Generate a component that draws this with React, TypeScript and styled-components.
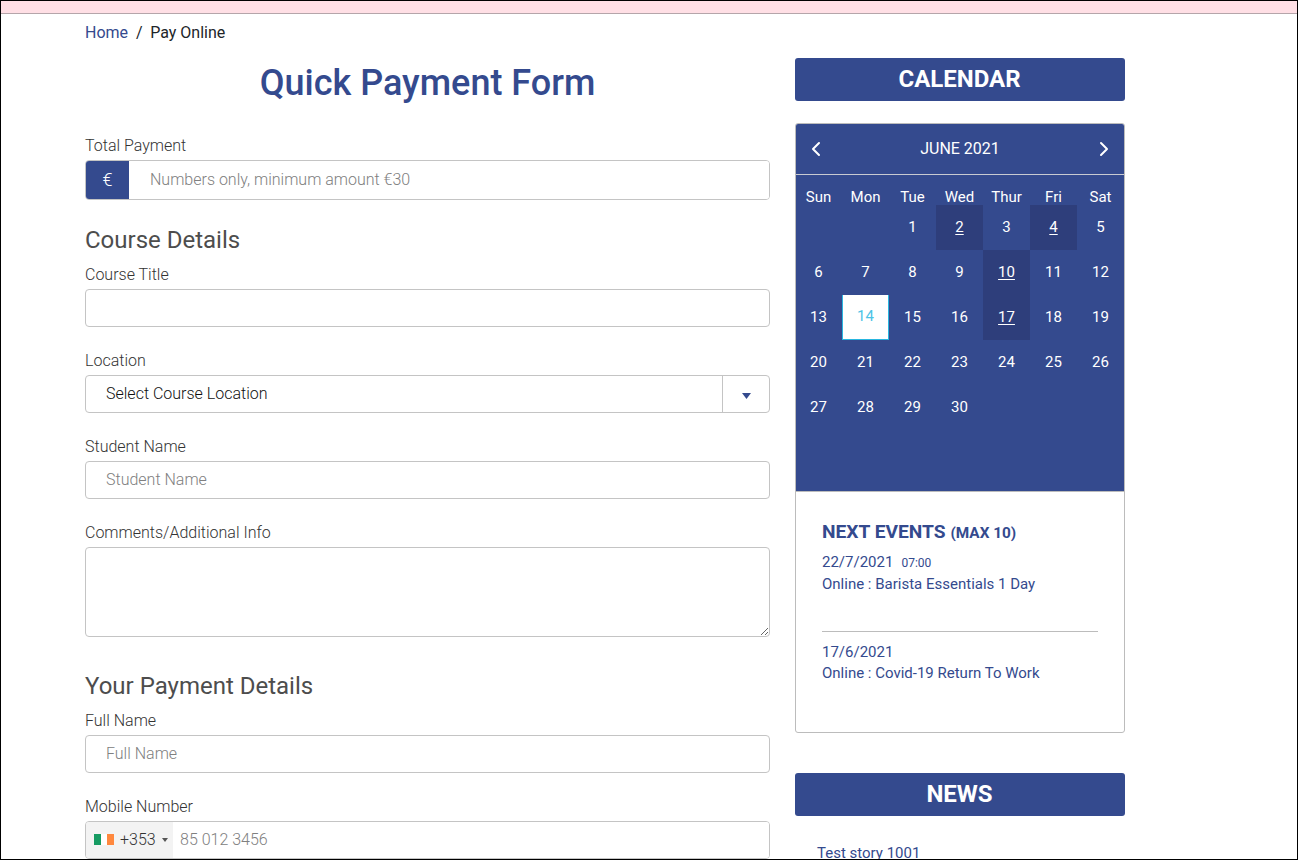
import styled, { createGlobalStyle } from "styled-components";
import { ChevronLeft, ChevronRight } from "lucide-react";

const blue = "#344a8e";

const GlobalStyle = createGlobalStyle`
  html, body {
    margin: 0;
    padding: 0;
    background: #fff;
    font-family: Roboto, "Liberation Sans", sans-serif;
  }
  * { box-sizing: border-box; }
`;

const Page = styled.div`
  height: 860px;
  overflow: hidden;
  border: 1px solid #000;
  background: #fff;
`;

const AlertBar = styled.div`
  height: 13px;
  background: #ffdfe5;
  border-bottom: 1px solid #b5a5aa;
`;

const Content = styled.div`
  display: grid;
  grid-template-columns: 685px 330px;
  column-gap: 25px;
  padding-left: 84px;
`;

const Breadcrumb = styled.nav`
  display: flex;
  height: 36px;
  align-items: center;
  font-size: 16px;
  color: #212529;
`;

const Crumb = styled.a`
  color: ${blue};
`;

const Sep = styled.span`
  padding: 0 7.5px 0 8px;
`;

const Title = styled.h1`
  margin: 7px 0 25px;
  font-size: 36px;
  line-height: 52px;
  font-weight: 500;
  text-align: center;
  color: ${blue};
`;

const Field = styled.div<{ $gap?: number }>`
  margin-bottom: ${(p) => p.$gap ?? 22}px;
`;

const Label = styled.label`
  display: block;
  height: 22px;
  margin-bottom: 4px;
  font-size: 16px;
  line-height: 24px;
  font-weight: 300;
  color: #333;
`;

const SectionTitle = styled.h2`
  margin: 0 0 8px;
  font-size: 24px;
  line-height: 30px;
  font-weight: 400;
  color: #4d4d4d;
`;

const Input = styled.input`
  display: block;
  width: 100%;
  height: 38px;
  padding: 0 20px 2px;
  border: 1px solid #c4c4c4;
  border-radius: 4px;
  outline: none;
  font: 300 16px Roboto, sans-serif;
  &::placeholder {
    color: #808080;
    opacity: 1;
  }
`;

const TextArea = styled.textarea`
  display: block;
  width: 100%;
  height: 90px;
  border: 1px solid #c4c4c4;
  border-radius: 4px;
  outline: none;
`;

const AmountGroup = styled.div`
  display: flex;
  height: 40px;
  border: 1px solid #c4c4c4;
  border-radius: 4px;
  overflow: hidden;
`;

const Addon = styled.span`
  display: flex;
  width: 43px;
  align-items: center;
  justify-content: center;
  padding-bottom: 2px;
  background: ${blue};
  color: #fff;
  font-size: 18px;
  font-weight: 300;
`;

const BareInput = styled.input`
  flex: 1;
  min-width: 0;
  padding: 0 20px 2px 21px;
  border: 0;
  outline: none;
  font: 300 16px Roboto, sans-serif;
  &::placeholder {
    color: #808080;
    opacity: 1;
  }
`;

const Select = styled.div`
  display: flex;
  height: 38px;
  border: 1px solid #c4c4c4;
  border-radius: 4px;
`;

const SelectValue = styled.span`
  flex: 1;
  padding-left: 20px;
  font-size: 16px;
  line-height: 35px;
  font-weight: 300;
  color: #111;
`;

const SelectArrow = styled.span`
  display: flex;
  width: 47px;
  align-items: center;
  justify-content: center;
  padding-top: 4px;
  border-left: 1px solid #c4c4c4;
  color: ${blue};
`;

const PhoneGroup = styled.div`
  display: flex;
  height: 38px;
  border: 1px solid #c4c4c4;
  border-radius: 4px;
  overflow: hidden;
`;

const DialCode = styled.div`
  display: flex;
  width: 87px;
  align-items: center;
  padding: 0 0 1px 8px;
  background: #f3f3f3;
  font-size: 16px;
  font-weight: 300;
  color: #333;
`;

const Flag = styled.span`
  display: block;
  width: 20px;
  height: 11px;
  margin-right: 6px;
  background: linear-gradient(90deg, #169b62 33.3%, #fff 33.3%, #fff 66.6%, #ff883e 66.6%);
`;

const Caret = styled.span`
  width: 0;
  height: 0;
  margin-left: 6px;
  border-left: 3px solid transparent;
  border-right: 3px solid transparent;
  border-top: 4px solid #555;
`;

const PhoneInput = styled(BareInput)`
  padding: 0 7px 1px;
`;

const Sidebar = styled.aside`
  padding-top: 44px;
`;

const SideHeading = styled.h3`
  margin: 0;
  height: 43px;
  padding-right: 1px;
  border-radius: 3px;
  background: ${blue};
  color: #fff;
  font-size: 24px;
  line-height: 42px;
  font-weight: 700;
  text-align: center;
`;

const CalendarBox = styled.section`
  height: 610px;
  margin: 22px 0 40px;
  border: 1px solid #bcbcbc;
  border-radius: 3px;
  overflow: hidden;
`;

const CalendarBlue = styled.div`
  height: 368px;
  background: ${blue};
  border-bottom: 1px solid #bcbcbc;
  color: #fff;
  font-size: 15px;
`;

const MonthBar = styled.div`
  display: flex;
  height: 51px;
  align-items: center;
  justify-content: space-between;
  padding: 0 8px;
  border-bottom: 1px solid #c9cbd2;
  font-size: 16px;
`;

const MonthLabel = styled.span`
  margin-bottom: 2px;
`;

const WeekRow = styled.div`
  display: grid;
  grid-template-columns: repeat(7, 47px);
  height: 30px;
  margin-left: -1px;
`;

const WeekDay = styled.div`
  padding-top: 14px;
  line-height: 16px;
  text-align: center;
  font-size: 15px;
`;

const Grid = styled.div`
  display: grid;
  grid-template-columns: repeat(7, 47px);
  grid-auto-rows: 45px;
  margin-left: -1px;
`;

const Day = styled.div<{ $event?: boolean; $today?: boolean }>`
  display: flex;
  align-items: center;
  justify-content: center;
  padding-bottom: 2px;
  font-size: 15px;
  background: ${(p) => (p.$today ? "#fff" : p.$event ? "#2e3e7b" : "transparent")};
  color: ${(p) => (p.$today ? "#4cc3e6" : "#fff")};
  border: ${(p) => (p.$today ? "1px solid #29b6e0" : "0")};
  border-top: 0;
  text-decoration: ${(p) => (p.$event ? "underline" : "none")};
  text-underline-offset: 2px;
`;

const Events = styled.div`
  padding: 28px 26px 0;
  color: ${blue};
`;

const EventsTitle = styled.h4`
  margin: 0 0 7px;
  font-size: 19.2px;
  line-height: 24px;
  font-weight: 700;
  small {
    font-size: 80%;
  }
`;

const EventItem = styled.div<{ $last?: boolean }>`
  height: ${(p) => (p.$last ? "auto" : "80px")};
  margin-bottom: ${(p) => (p.$last ? "0" : "10px")};
  border-bottom: ${(p) => (p.$last ? "0" : "1px solid #bcbcbc")};
  font-size: 15px;
  line-height: 21px;
`;

const EventTime = styled.span`
  margin-left: 8px;
  font-size: 12px;
  line-height: 22px;
`;

const NewsLink = styled.a`
  display: block;
  margin: 27px 0 0 22px;
  font-size: 15px;
  line-height: 20px;
  color: ${blue};
`;

const weekDays = ["Sun", "Mon", "Tue", "Wed", "Thur", "Fri", "Sat"];
const eventDays = [2, 4, 10, 17];
const days = [null, null, ...Array.from({ length: 30 }, (_, i) => i + 1)];

export default function App() {
  return (
    <Page>
      <GlobalStyle />
      <AlertBar />
      <Content>
        <main>
          <Breadcrumb>
            <Crumb>Home</Crumb>
            <Sep>/</Sep>
            <span>Pay Online</span>
          </Breadcrumb>
          <Title>Quick Payment Form</Title>
          <Field $gap={25}>
            <Label>Total Payment</Label>
            <AmountGroup>
              <Addon>€</Addon>
              <BareInput placeholder="Numbers only, minimum amount €30" />
            </AmountGroup>
          </Field>
          <SectionTitle>Course Details</SectionTitle>
          <Field>
            <Label>Course Title</Label>
            <Input />
          </Field>
          <Field>
            <Label>Location</Label>
            <Select>
              <SelectValue>Select Course Location</SelectValue>
              <SelectArrow>
                <svg width="9" height="6" viewBox="0 0 9 6">
                  <path d="M0 0h9L4.5 6z" fill="currentColor" />
                </svg>
              </SelectArrow>
            </Select>
          </Field>
          <Field>
            <Label>Student Name</Label>
            <Input placeholder="Student Name" />
          </Field>
          <Field $gap={34}>
            <Label>Comments/Additional Info</Label>
            <TextArea />
          </Field>
          <SectionTitle>Your Payment Details</SectionTitle>
          <Field>
            <Label>Full Name</Label>
            <Input placeholder="Full Name" />
          </Field>
          <Field>
            <Label>Mobile Number</Label>
            <PhoneGroup>
              <DialCode>
                <Flag />
                +353
                <Caret />
              </DialCode>
              <PhoneInput placeholder="85 012 3456" />
            </PhoneGroup>
          </Field>
        </main>
        <Sidebar>
          <SideHeading>CALENDAR</SideHeading>
          <CalendarBox>
            <CalendarBlue>
              <MonthBar>
                <ChevronLeft size={24} strokeWidth={2} />
                <MonthLabel>JUNE 2021</MonthLabel>
                <ChevronRight size={24} strokeWidth={2} />
              </MonthBar>
              <WeekRow>
                {weekDays.map((d) => (
                  <WeekDay key={d}>{d}</WeekDay>
                ))}
              </WeekRow>
              <Grid>
                {days.map((d, i) => (
                  <Day key={i} $event={d !== null && eventDays.includes(d)} $today={d === 14}>
                    {d}
                  </Day>
                ))}
              </Grid>
            </CalendarBlue>
            <Events>
              <EventsTitle>
                NEXT EVENTS <small>(MAX 10)</small>
              </EventsTitle>
              <EventItem>
                22/7/2021<EventTime>07:00</EventTime>
                <br />
                Online : Barista Essentials 1 Day
              </EventItem>
              <EventItem $last>
                17/6/2021
                <br />
                Online : Covid-19 Return To Work
              </EventItem>
            </Events>
          </CalendarBox>
          <SideHeading>NEWS</SideHeading>
          <NewsLink>Test story 1001</NewsLink>
        </Sidebar>
      </Content>
    </Page>
  );
}
